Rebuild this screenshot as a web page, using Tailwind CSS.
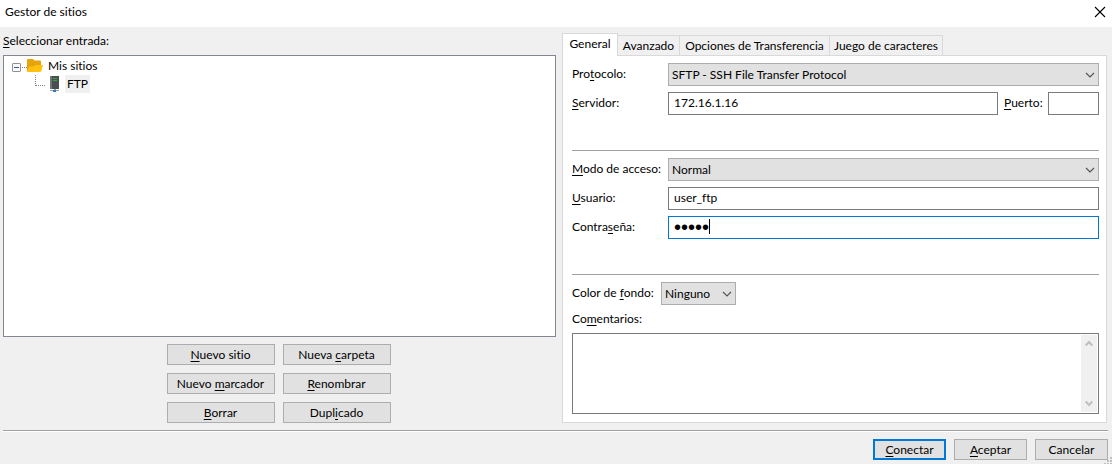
<!DOCTYPE html>
<html lang="es">
<head>
<meta charset="utf-8">
<meta name="viewport" content="width=device-width, initial-scale=1">
<title>Gestor de sitios</title>
<script src="https://cdn.jsdelivr.net/npm/@tailwindcss/browser@4"></script>
</head>
<body class="flex min-h-screen flex-col bg-[#f0f0f0] font-['Lato','Noto_Sans',sans-serif] text-[12px] leading-4 text-black [font-variant-ligatures:none]">
<header class="flex h-[27px] items-center justify-between bg-white pr-[6px] pb-1 pl-[5px]">
  <h1>Gestor de sitios</h1>
  <button type="button" aria-label="Cerrar" class="flex h-4 w-3 items-center justify-center">
    <svg class="size-3" viewBox="0 0 12 12" fill="none" stroke="#000" stroke-width="1.1"><path d="M1 1l10 10M11 1L1 11"/></svg>
  </button>
</header>

<main class="grid grid-cols-[553fr_545fr] gap-x-[6px] pr-[5px] pl-[3px]">
  <section class="flex flex-col pt-[6px]">
    <h2 id="tree-label" class="mb-[6px]"><u class="underline-offset-2">S</u>eleccionar entrada:</h2>
    <ul role="tree" aria-labelledby="tree-label" class="h-[282px] border border-[#828790] bg-white pt-px pl-2">
      <li role="treeitem" aria-expanded="true">
        <div class="flex h-[18px] items-center">
          <svg class="h-[18px] w-7" viewBox="0 0 28 18" fill="none">
            <rect x=".5" y="6.500" width="8" height="8" rx=".5" fill="#fafafa" stroke="#919191"/>
            <path d="M2 10.500h5" stroke="#3355a5"/>
            <path d="M10 10.500h5" stroke="#808080" stroke-dasharray="1 1"/>
          </svg>
          <svg class="-ml-[13px] h-[18px] w-4" viewBox="0 0 16 18">
            <path d="M0 3q0-1 1-1h5l1.500 1.500H13q1 0 1 1V13q0 1-1 1H1q-1 0-1-1z" fill="#e5a50a"/>
            <path d="M0 14.500L2 9.500h5L8.500 8H16l-1.400 5.300q-.300 1.700-1.600 1.700H1q-1 0-1-.500z" fill="#ffc10e"/>
          </svg>
          <span class="ml-[5px]">Mis sitios</span>
        </div>
        <ul role="group">
          <li role="treeitem" aria-selected="true" class="flex h-[18px] items-center">
            <svg class="h-[18px] w-[34px]" viewBox="0 0 34 18" fill="none" stroke="#808080" stroke-dasharray="1 1"><path d="M23.500 0v11M24 10.500h10"/></svg>
            <svg class="h-[18px] w-4" viewBox="0 0 16 18">
              <path d="M4 1h9v13H4z" fill="#4b4e50"/>
              <path d="M4 1h2v13H4z" fill="#737678"/>
              <path d="M7 3h4v1H7zM7 5h4v1H7z" fill="#2fae3c"/>
              <path d="M8 14h2v1H8zM4 15h9v1H4z" fill="#9aa0a4"/>
              <path d="M7 15h3v2H7z" fill="#2a7fd0"/>
            </svg>
            <span class="ml-[3px] flex h-[18px] items-center bg-[#f0f0f0] px-[2px]">FTP</span>
          </li>
        </ul>
      </li>
    </ul>
    <div class="mt-[7px] mr-[2px] grid grid-cols-[108px_108px] justify-center gap-2">
      <button type="button" class="h-[21px] border border-[#adadad] bg-[#e1e1e1]"><u class="underline-offset-2">N</u>uevo sitio</button>
      <button type="button" class="h-[21px] border border-[#adadad] bg-[#e1e1e1]">Nueva <u class="underline-offset-2">c</u>arpeta</button>
      <button type="button" class="h-[21px] border border-[#adadad] bg-[#e1e1e1]">Nuevo <u class="underline-offset-2">m</u>arcador</button>
      <button type="button" class="h-[21px] border border-[#adadad] bg-[#e1e1e1]"><u class="underline-offset-2">R</u>enombrar</button>
      <button type="button" class="h-[21px] border border-[#adadad] bg-[#e1e1e1]"><u class="underline-offset-2">B</u>orrar</button>
      <button type="button" class="h-[21px] border border-[#adadad] bg-[#e1e1e1]">Dupl<u class="underline-offset-2">i</u>cado</button>
    </div>
  </section>

  <section class="flex flex-col pt-[6px]">
    <div role="tablist" class="relative z-10 -mb-px flex items-end">
      <button type="button" role="tab" aria-selected="true" class="h-[23px] w-14 border border-b-0 border-[#d9d9d9] bg-white pb-[2px]">General</button>
      <button type="button" role="tab" aria-selected="false" class="h-[21px] w-[62px] border border-l-0 border-[#d9d9d9]">Avanzado</button>
      <button type="button" role="tab" aria-selected="false" class="h-[21px] w-[150px] border border-l-0 border-[#d9d9d9]">Opciones de Transferencia</button>
      <button type="button" role="tab" aria-selected="false" class="h-[21px] w-[113px] border border-l-0 border-[#d9d9d9]">Juego de caracteres</button>
    </div>
    <form class="flex flex-col border border-[#d9d9d9] bg-white pt-[7px] pr-[7px] pb-2 pl-[9px]">
      <div class="grid grid-cols-[96px_1fr] items-center gap-y-[6px]">
        <label for="protocol" class="pb-[2px]">Pro<u class="underline-offset-2">t</u>ocolo:</label>
        <div class="relative">
          <select id="protocol" class="block h-[23px] w-full appearance-none border border-[#adadad] bg-[#e1e1e1] pl-[3px]"><option>SFTP - SSH File Transfer Protocol</option></select>
          <svg class="pointer-events-none absolute top-2 right-1 h-2 w-[10px]" viewBox="0 0 10 8" fill="none" stroke="#555" stroke-width="1.200"><path d="M1 2l4 4 4-4"/></svg>
        </div>
        <label for="host" class="pb-[2px]"><u class="underline-offset-2">S</u>ervidor:</label>
        <div class="flex items-center gap-[6px]">
          <input id="host" type="text" value="172.16.1.16" class="h-[23px] min-w-0 flex-1 border border-[#7a7a7a] bg-white px-[5px] pb-[2px]">
          <label for="port" class="w-[38px] pb-[2px]"><u class="underline-offset-2">P</u>uerto:</label>
          <input id="port" type="text" class="h-[23px] w-[51px] border border-[#7a7a7a] bg-white px-[5px] pb-[2px]">
        </div>
      </div>
      <hr class="mt-[35px] mb-[7px] border-[#a0a0a0]">
      <div class="grid grid-cols-[96px_1fr] items-center gap-y-[6px]">
        <label for="logon" class="pb-[2px]"><u class="underline-offset-2">M</u>odo de acceso:</label>
        <div class="relative">
          <select id="logon" class="block h-[23px] w-full appearance-none border border-[#adadad] bg-[#e1e1e1] pl-[3px]"><option>Normal</option></select>
          <svg class="pointer-events-none absolute top-2 right-1 h-2 w-[10px]" viewBox="0 0 10 8" fill="none" stroke="#555" stroke-width="1.200"><path d="M1 2l4 4 4-4"/></svg>
        </div>
        <label for="user" class="pb-[2px]"><u class="underline-offset-2">U</u>suario:</label>
        <input id="user" type="text" value="user_ftp" class="h-[23px] w-full border border-[#7a7a7a] bg-white px-[5px] pb-[2px]">
        <label for="pass" class="pb-[2px]">Contra<u class="underline-offset-2">s</u>eña:</label>
        <div class="relative">
          <input id="pass" type="password" value="abcde" class="block h-[23px] w-full border border-[#0078d7] bg-white px-[5px] font-['Liberation_Sans',sans-serif] text-[20px] leading-5">
          <span class="absolute top-[3px] left-[41px] h-[15px] w-px bg-black"></span>
        </div>
      </div>
      <hr class="mt-[35px] mb-[7px] border-[#a0a0a0]">
      <div class="flex items-center">
        <label for="color" class="w-[89px] pb-[2px]">Color de <u class="underline-offset-2">f</u>ondo:</label>
        <div class="relative w-[75px]">
          <select id="color" class="block h-[23px] w-full appearance-none border border-[#adadad] bg-[#e1e1e1] pl-[3px]"><option>Ninguno</option></select>
          <svg class="pointer-events-none absolute top-2 right-1 h-2 w-[10px]" viewBox="0 0 10 8" fill="none" stroke="#555" stroke-width="1.200"><path d="M1 2l4 4 4-4"/></svg>
        </div>
      </div>
      <label for="comments" class="mt-[6px] mb-[6px]">Co<u class="underline-offset-2">m</u>entarios:</label>
      <div class="flex h-[81px] border border-[#7a7a7a] p-px">
        <textarea id="comments" class="min-w-0 flex-1 resize-none px-1"></textarea>
        <div class="flex w-4 flex-col items-center justify-between bg-[#f0f0f0] py-[5px]">
          <svg class="h-[7px] w-2" viewBox="0 0 8 7" fill="none" stroke="#bfbfbf" stroke-width="2"><path d="M.700 5.500L4 2l3.300 3.500"/></svg>
          <svg class="h-[7px] w-2" viewBox="0 0 8 7" fill="none" stroke="#bfbfbf" stroke-width="2"><path d="M.700 1.500L4 5l3.300-3.500"/></svg>
        </div>
      </div>
    </form>
  </section>
</main>

<footer class="relative mt-[7px] flex flex-1 flex-col pr-1 pb-1 pl-[3px]">
  <div class="h-[2px] border-t border-[#a0a0a0] bg-white"></div>
  <div class="mt-[7px] flex justify-end gap-2">
    <button type="button" class="h-[21px] w-[73px] border-2 border-[#0078d7] bg-[#e1e1e1] leading-none"><u class="underline-offset-2">C</u>onectar</button>
    <button type="button" class="h-[21px] w-[73px] border border-[#adadad] bg-[#e1e1e1]"><u class="underline-offset-2">A</u>ceptar</button>
    <button type="button" class="h-[21px] w-[73px] border border-[#adadad] bg-[#e1e1e1]">Cancelar</button>
  </div>
  <svg class="absolute right-0 bottom-0 h-[7px] w-2" viewBox="0 0 8 7" fill="#bfbfbf"><path d="M6 0h2v2H6zM3 3h2v2H3zM6 3h2v2H6zM0 6h2v1H0zM3 6h2v1H3zM6 6h2v1H6z"/></svg>
</footer>
</body>
</html>
